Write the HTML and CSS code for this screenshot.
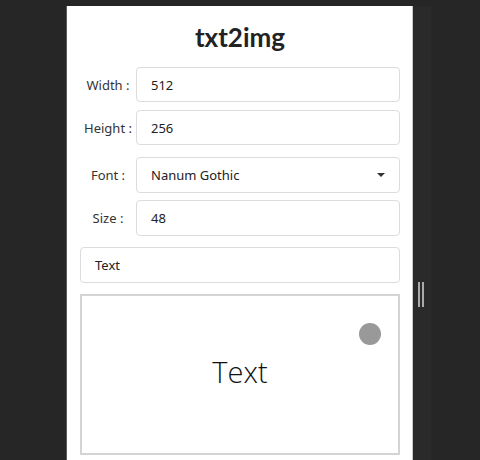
FILE: index.html
```html
<!DOCTYPE html>
<html>
<head>
<meta charset="utf-8">
<link rel="stylesheet" href="styles.css">
</head>
<body>
<div class="stage">
  <div class="panel">
    <h1 class="title">txt2img</h1>
    <div class="row row-width">
      <label class="label">Width :</label>
      <div class="field">512</div>
    </div>
    <div class="row row-height">
      <label class="label">Height :</label>
      <div class="field">256</div>
    </div>
    <div class="row row-font">
      <label class="label">Font :</label>
      <div class="field select">
        <span>Nanum Gothic</span>
        <svg class="caret" width="8" height="4" viewBox="0 0 8 4"><path d="M0 0H8L4 4Z" fill="#333"/></svg>
      </div>
    </div>
    <div class="row row-size">
      <label class="label">Size :</label>
      <div class="field">48</div>
    </div>
    <div class="field text-field">Text</div>
    <div class="preview">
      <span class="preview-text">Text</span>
      <span class="dot"></span>
    </div>
  </div>
  <div class="gutter">
    <span class="handle"></span>
  </div>
</div>
</body>
</html>
```
FILE: styles.css
```css
* { box-sizing: border-box; }
html, body { margin: 0; padding: 0; }
body {
  background: #262626;
  width: 480px;
  height: 460px;
  overflow: hidden;
  font-family: "Noto Sans", "Open Sans", sans-serif;
  color: #222;
}
.stage {
  display: flex;
  padding-left: 66px;
  padding-top: 6px;
  height: 460px;
}
.panel {
  width: 347px;
  height: 460px;
  background: #fff;
  border-left: 1px solid #5a5a5a;
  border-right: 1px solid #c8c8c8;
  padding: 16px 12px 0 13px;
}
.title {
  margin: 0 0 15px;
  font-family: Lato, "Noto Sans", sans-serif;
  font-weight: 700;
  font-size: 26px;
  line-height: 30px;
  text-align: center;
  color: #222;
}
.row {
  display: flex;
  align-items: center;
}
.row-width { margin-bottom: 8px; }
.row-height { margin-bottom: 12px; }
.row-font { margin-bottom: 7px; }
.row-size { margin-bottom: 11px; }
.label {
  width: 56px;
  text-align: center;
  font-size: 13px;
  color: #333;
}
.field {
  flex: 1;
  height: 35px;
  border: 1px solid #dcdcdc;
  border-radius: 4px;
  padding: 0 14px;
  display: flex;
  align-items: center;
  font-size: 13px;
  color: #222;
}
.row-font .field, .row-size .field { height: 36px; }
.select { justify-content: space-between; padding-right: 14px; }
.caret { display: block; }
.text-field {
  margin-bottom: 11px;
  height: 36px;
}
.preview {
  position: relative;
  height: 161px;
  border: 2px solid #d4d4d4;
  display: flex;
  align-items: center;
  justify-content: center;
  padding-bottom: 6px;
}
.preview-text {
  font-family: "Open Sans", "Noto Sans", sans-serif;
  font-weight: 300;
  font-size: 29px;
  color: #111;
}
.dot {
  position: absolute;
  left: 277px;
  top: 27px;
  width: 22px;
  height: 22px;
  border-radius: 50%;
  background: #999;
}
.gutter {
  width: 18px;
  height: 460px;
  background: #2a2a2a;
  display: flex;
  align-items: flex-start;
  padding-top: 276px;
  padding-left: 5px;
}
.handle {
  width: 6px;
  height: 25px;
  border-left: 2px solid #aaa;
  border-right: 2px solid #aaa;
}
```
